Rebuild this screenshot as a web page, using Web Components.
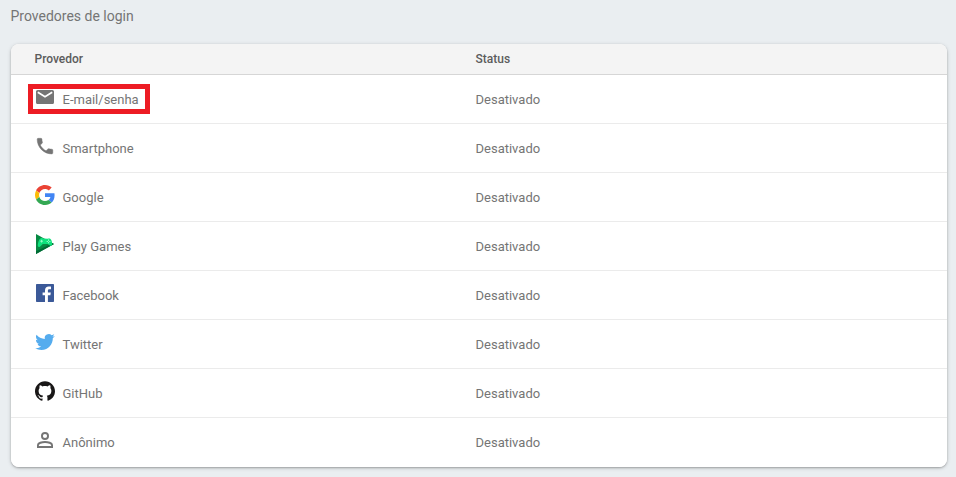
<!DOCTYPE html>
<html lang="pt-BR">
<head>
<meta charset="utf-8">
<title>Provedores de login</title>
<style>
html{background:#eaeef1}
body{margin:0;font-family:Roboto,"Noto Sans",sans-serif;color:#757575}
</style>
</head>
<body>
<provider-panel>
  <span slot="title">Provedores de login</span>
  <provider-row icon="mail" marked>E-mail/senha<span slot="status">Desativado</span></provider-row>
  <provider-row icon="phone">Smartphone<span slot="status">Desativado</span></provider-row>
  <provider-row icon="google">Google<span slot="status">Desativado</span></provider-row>
  <provider-row icon="play">Play Games<span slot="status">Desativado</span></provider-row>
  <provider-row icon="facebook">Facebook<span slot="status">Desativado</span></provider-row>
  <provider-row icon="twitter">Twitter<span slot="status">Desativado</span></provider-row>
  <provider-row icon="github">GitHub<span slot="status">Desativado</span></provider-row>
  <provider-row icon="person">Anônimo<span slot="status">Desativado</span></provider-row>
</provider-panel>
<script>
const ICONS = {
  mail: '<path fill="#757575" d="M2.6 3h14.8A1.6 1.6 0 0 1 19 4.600V15.400A1.600 1.600 0 0 1 17.400 17H2.600A1.600 1.600 0 0 1 1 15.400V4.600A1.600 1.600 0 0 1 2.600 3z"/><path fill="none" stroke="#fff" stroke-width="1.700" d="M2.800 5.200 10 9.800l7.200-4.600"/>',
  phone: '<path fill="#757575" stroke="#757575" stroke-width=".5" transform="translate(-.45 -.3) scale(.87)" d="M6.620 10.790c1.440 2.830 3.760 5.140 6.590 6.590l2.200-2.200c.27-.27.67-.36 1.020-.24 1.120.37 2.330.57 3.570.57.550 0 1 .45 1 1V20c0 .55-.45 1-1 1-9.390 0-17-7.610-17-17 0-.55.45-1 1-1h3.500c.55 0 1 .45 1 1 0 1.250.2 2.450.57 3.570.11.35.03.74-.25 1.020l-2.200 2.200z"/>',
  google: '<g transform="scale(.4167)"><path fill="#EA4335" d="M24 9.500c3.540 0 6.710 1.220 9.210 3.600l6.850-6.850C35.900 2.380 30.470 0 24 0 14.620 0 6.510 5.380 2.560 13.220l7.980 6.190C12.430 13.720 17.740 9.500 24 9.500z"/><path fill="#4285F4" d="M46.980 24.550c0-1.570-.15-3.090-.38-4.550H24v9.020h12.940c-.58 2.960-2.260 5.480-4.780 7.180l7.730 6c4.510-4.180 7.090-10.360 7.090-17.650z"/><path fill="#FBBC05" d="M10.530 28.590c-.48-1.450-.76-2.990-.76-4.590s.27-3.140.76-4.590l-7.980-6.190C.92 16.460 0 20.120 0 24c0 3.880.92 7.540 2.560 10.780l7.970-6.190z"/><path fill="#34A853" d="M24 48c6.480 0 11.930-2.130 15.890-5.810l-7.730-6c-2.150 1.450-4.920 2.300-8.160 2.300-6.260 0-11.570-4.220-13.470-9.910l-7.980 6.190C6.510 42.620 14.620 48 24 48z"/></g>',
  play: '<path fill="#078943" d="M1 0 19 10 1 20z"/><path fill="#006b35" d="M1 17.300 17.500 9.200 19 10 1 20z"/><path fill="#0fe07c" d="M6.200 4c1.100-.3 1.700.5 2.700.6l3.600.1c1.100 0 2-.4 3 .4 1.300 1.200 1.700 3.800 1.500 5.400-.3 1.700-1.800 1.700-2.900.6L12.800 10l-5-.1-2.600 2.500c-1.300 1.200-2.500.6-2.400-1.100C3 8.900 3.900 4.700 6.200 4z"/><path stroke="#a8ffd0" stroke-width=".8" d="M6.600 5.800v2.800M5.200 7.200H8"/><path fill="#a8ffd0" d="M13 5.600h1.100v1.100H13zM14.300 6.900h1.100V8h-1.100zM11.700 6.900h1.100V8h-1.100zM13 8.200h1.100v1.100H13z"/>',
  facebook: '<rect x="1" y="1" width="18" height="18" rx=".8" fill="#3b5998"/><path fill="#fff" d="M12.900 19v-6.700h2.500l.4-2.900h-2.900V7.700c0-.8.300-1.400 1.500-1.400H16V3.700c-.3 0-1.200-.1-2.200-.1-2.400 0-3.800 1.400-3.800 3.800v2H7.600v2.900H10V19z"/>',
  twitter: '<path fill="#55acee" transform="translate(.2 .2) scale(.817)" d="M23.950 4.570a10 10 0 0 1-2.820.77 4.960 4.960 0 0 0 2.160-2.720c-.95.550-2 .95-3.130 1.180a4.920 4.920 0 0 0-8.380 4.480C7.690 8.100 4.070 6.130 1.640 3.160a4.820 4.820 0 0 0-.67 2.480c0 1.710.870 3.210 2.190 4.100a4.900 4.900 0 0 1-2.230-.62v.06a4.920 4.920 0 0 0 3.950 4.830 5 5 0 0 1-2.210.08 4.940 4.940 0 0 0 4.600 3.420A9.870 9.870 0 0 1 0 19.540a14 14 0 0 0 7.550 2.210c9.050 0 14-7.500 14-13.980 0-.21 0-.42-.02-.63a9.940 9.940 0 0 0 2.460-2.550z"/>',
  github: '<path fill="#191717" transform="scale(.8333)" d="M12 .297c-6.630 0-12 5.373-12 12 0 5.303 3.438 9.800 8.205 11.385.6.113.82-.258.82-.577 0-.285-.01-1.040-.015-2.040-3.338.724-4.042-1.610-4.042-1.610C4.422 18.070 3.633 17.700 3.633 17.700c-1.087-.744.084-.729.084-.729 1.205.084 1.838 1.236 1.838 1.236 1.070 1.835 2.809 1.305 3.495.998.108-.776.417-1.305.760-1.605-2.665-.3-5.466-1.332-5.466-5.930 0-1.310.465-2.380 1.235-3.220-.135-.303-.54-1.523.105-3.176 0 0 1.005-.322 3.300 1.230.96-.267 1.980-.399 3-.405 1.020.006 2.040.138 3 .405 2.280-1.552 3.285-1.230 3.285-1.230.645 1.653.24 2.873.12 3.176.765.840 1.230 1.910 1.230 3.220 0 4.610-2.805 5.625-5.475 5.920.42.360.81 1.096.81 2.220 0 1.606-.015 2.896-.015 3.286 0 .315.210.690.825.570C20.565 22.092 24 17.592 24 12.297c0-6.627-5.373-12-12-12"/>',
  person: '<g fill="none" stroke="#757575" stroke-width="1.900"><circle cx="10" cy="6" r="3.050"/><path d="M2.950 17.050V15c0-1.900 4-3.050 7.050-3.050s7.050 1.150 7.050 3.050v2.050z"/></g>'
};

customElements.define('provider-icon', class extends HTMLElement {
  connectedCallback() {
    this.attachShadow({mode: 'open'}).innerHTML =
      `<style>:host{display:block;width:20px;height:20px;flex:none}svg{display:block}</style>
       <svg width="20" height="20" viewBox="0 0 20 20">${ICONS[this.getAttribute('name')]}</svg>`;
  }
});

customElements.define('provider-row', class extends HTMLElement {
  connectedCallback() {
    this.attachShadow({mode: 'open'}).innerHTML = `
      <style>
        :host{display:grid;grid-template-columns:440.5px 1fr;box-sizing:border-box;height:49px;
          padding-left:24px;border-bottom:1px solid #ebebeb;background:#fff;font-size:13px;line-height:20px}
        :host(:last-of-type){border-bottom-color:transparent}
        .provider{position:relative;display:flex;gap:7.5px;padding-top:12px;width:max-content}
        .label{padding-top:3px}
        .status{padding-top:15px}
        .mark{position:absolute;left:-7px;top:9px;width:122px;height:30px;box-sizing:border-box;border:5px solid #ed1c24}
      </style>
      <div class="provider"><provider-icon name="${this.getAttribute('icon')}"></provider-icon>
        <div class="label"><slot></slot></div>${this.hasAttribute('marked') ? '<div class="mark"></div>' : ''}</div>
      <div class="status"><slot name="status"></slot></div>`;
  }
});

customElements.define('provider-panel', class extends HTMLElement {
  connectedCallback() {
    this.attachShadow({mode: 'open'}).innerHTML = `
      <style>
        :host{display:block;padding:6px 9px 10px 11px}
        .title{font-size:14px;line-height:20px;height:38px;margin-left:-.5px}
        .card{border-radius:8px;overflow:hidden;background:#fff;
          box-shadow:0 1px 2px rgba(0,0,0,.24),0 1px 4px rgba(0,0,0,.16)}
        .head{display:grid;grid-template-columns:441px 1fr;box-sizing:border-box;height:31px;padding-left:23.5px;
          background:#f4f4f4;border-bottom:1px solid #d6d6d6;font-size:12px;font-weight:500;line-height:30px;color:#5c5c5c}
      </style>
      <div class="title"><slot name="title"></slot></div>
      <div class="card"><div class="head"><span>Provedor</span><span>Status</span></div><slot></slot></div>`;
  }
});
</script>
</body>
</html>
